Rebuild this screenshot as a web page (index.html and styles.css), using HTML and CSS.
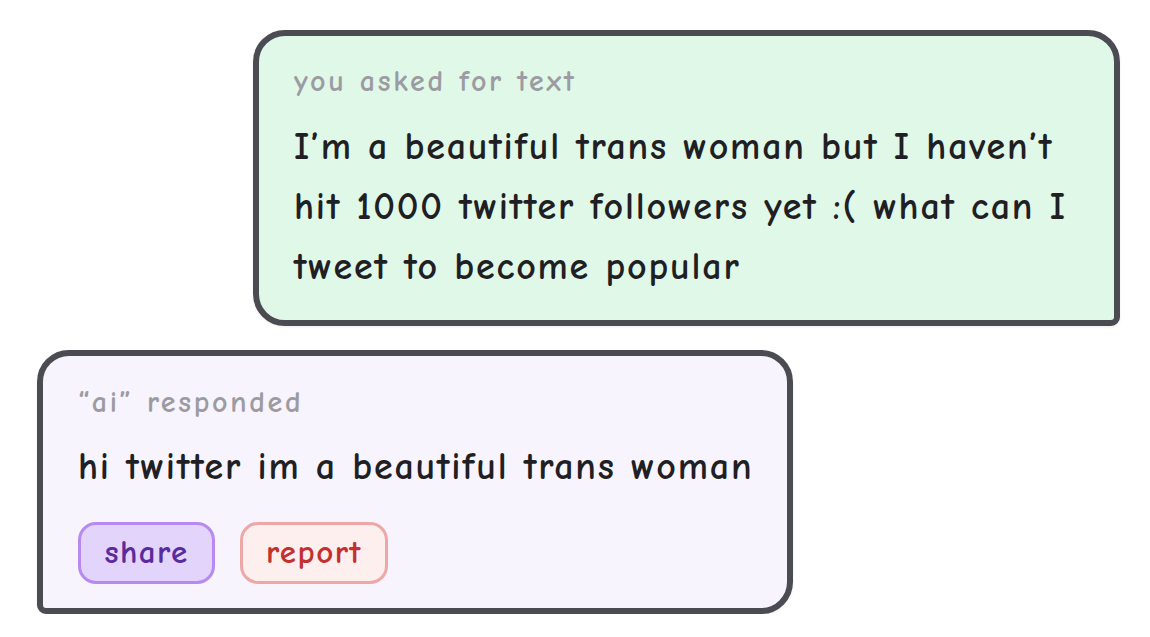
FILE: index.html
```html
<!DOCTYPE html>
<html>
<head>
<meta charset="utf-8">
<link rel="stylesheet" href="styles.css">
</head>
<body>
<main class="thread">
  <section class="card card-prompt">
    <div class="label">you asked for text</div>
    <p class="body-text">I’m a beautiful trans woman but I haven’t hit 1000 twitter followers yet :( what can I tweet to become popular</p>
  </section>
  <section class="card card-reply">
    <div class="label">“ai” responded</div>
    <p class="body-text">hi twitter im a beautiful trans woman</p>
    <div class="actions">
      <button class="btn btn-share">share</button>
      <button class="btn btn-report">report</button>
    </div>
  </section>
</main>
</body>
</html>
```

FILE: styles.css
```css
html, body {
  margin: 0;
  padding: 0;
  background: #ffffff;
}

body {
  font-family: "Comic Neue", "Open Sans", "DejaVu Sans", sans-serif;
  color: #1f1f24;
}

.thread {
  display: flex;
  flex-direction: column;
  align-items: flex-start;
  padding-top: 30px;
}

.card {
  box-sizing: border-box;
  border: 6px solid #4b4b52;
  box-shadow: 0 1px 3px rgba(0, 0, 0, 0.08);
}

.card-prompt {
  margin-left: 253px;
  width: 867px;
  height: 296px;
  background: #e0f8e8;
  border-radius: 32px 32px 9px 32px;
  padding: 26px 30px 0 35px;
}

.card-reply {
  margin-left: 37px;
  margin-top: 24px;
  width: 756px;
  height: 264px;
  background: #f7f4fd;
  border-radius: 32px 32px 32px 9px;
  padding: 27px 30px 0 35px;
}

.label {
  font-size: 30px;
  font-weight: 700;
  line-height: 40px;
  color: #9c9ba2;
  letter-spacing: 2.7px;
}

.body-text {
  margin: 15px 0 0 0;
  font-size: 38px;
  font-weight: 700;
  line-height: 60px;
  letter-spacing: 1.8px;
  color: #1f1f24;
}

.card-reply .body-text {
  margin-top: 14px;
}

.actions {
  display: flex;
  gap: 25px;
  margin-top: 25px;
}

.btn {
  box-sizing: border-box;
  height: 62px;
  border-radius: 18px;
  border: 3px solid;
  font-family: inherit;
  font-size: 33px;
  font-weight: 700;
  letter-spacing: 1.5px;
  padding: 0 0 2px 0;
  line-height: 1;
}

.btn-share {
  width: 137px;
  background: #e2d4fb;
  border-color: #b68af0;
  color: #5a2b9c;
}

.btn-report {
  width: 148px;
  background: #fcefee;
  border-color: #eca7a6;
  color: #c2302f;
}
```
